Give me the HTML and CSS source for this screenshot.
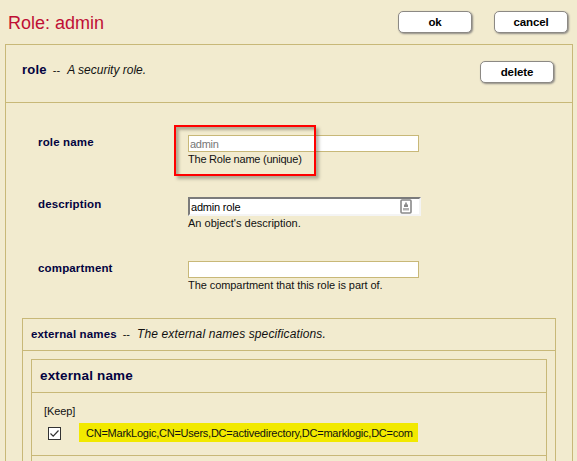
FILE: index.html
```html
<!DOCTYPE html>
<html lang="en">
<head>
<meta charset="utf-8">
<title>Role: admin</title>
<link rel="stylesheet" href="styles.css">
</head>
<body>
<header class="topbar">
  <h1 class="title">Role: admin</h1>
  <button class="btn">ok</button>
  <button class="btn">cancel</button>
</header>
<main class="panel">
  <div class="panel-head">
    <span class="name">role</span><span class="dash">--</span><em class="info role-info">A security role.</em>
    <button class="btn delete">delete</button>
  </div>
  <div class="fields">
    <div class="row">
      <label class="label">role name</label>
      <div class="control">
        <div class="input muted"><span class="v-admin">admin</span></div>
        <div class="help h-name">The Role name (unique)</div>
        <div class="callout"></div>
      </div>
    </div>
    <div class="row row-desc">
      <label class="label l-desc">description</label>
      <div class="control">
        <div class="input inset"><span class="v-desc">admin role</span>
          <svg class="autofill" width="12" height="15" viewBox="0 0 12 15"><rect x="1" y="1" width="10" height="13" rx="1" fill="#fff" stroke="#898989" stroke-width="1.6"/><path d="M5.200 3.500h1.600v2H8V8H4V5.500h1.200z" fill="#888"/><path d="M3 9h6v2.500H3z" fill="#b2b2b2"/></svg>
        </div>
        <div class="help">An object's description.</div>
      </div>
    </div>
    <div class="row row-comp">
      <label class="label">compartment</label>
      <div class="control">
        <div class="input"></div>
        <div class="help h-comp">The compartment that this role is part of.</div>
      </div>
    </div>
  </div>
  <section class="group">
    <div class="group-head"><span class="gname">external names</span><span class="dash gdash">--</span><em class="info ginfo">The external names specifications.</em></div>
    <div class="item">
      <h2 class="item-head"><span>external name</span></h2>
      <div class="item-body">
        <div class="keep">[Keep]</div>
        <div class="entry">
          <svg class="check" width="13" height="13" viewBox="0 0 13 13"><rect x=".5" y=".5" width="12" height="12" fill="#fff" stroke="#333"/><path d="M2.500 6.500l2.700 2.700L10.500 3.500" fill="none" stroke="#333" stroke-width="1.200"/></svg>
          <span class="mark">CN=MarkLogic,CN=Users,DC=activedirectory,DC=marklogic,DC=com</span>
        </div>
      </div>
    </div>
  </section>
</main>
</body>
</html>
```

FILE: styles.css
```css
* { box-sizing: border-box; }
html { height: 100%; overflow: hidden; }
body {
  margin: 0;
  height: 461px;
  overflow: hidden;
  display: flex;
  flex-direction: column;
  background: #f2ebcf;
  color: #111;
  font: 11px/13px "Liberation Sans", Arial, sans-serif;
}
.topbar { display: flex; flex: none; height: 44px; padding: 11px 9px 0 8px; gap: 22px; }
.title { flex: 1; margin: 2px 0 0; font-size: 18px; line-height: 21px; font-weight: 400; color: #bf0f35; }
.btn {
  width: 74px;
  height: 22px;
  padding: 1px 0 0;
  border: 1px solid #8c8984;
  border-radius: 5px;
  background: #fff;
  box-shadow: 1px 1px 2px #8c8984;
  color: #000;
  font: bold 11.5px/13px "Liberation Sans", Arial, sans-serif;
  letter-spacing: -.1px;
}
.panel { flex: none; width: 568px; height: 417px; margin-left: 5px; border: 1px solid #c8b878; border-bottom: 0; overflow: hidden; }
.panel-head { display: flex; height: 58px; padding: 16px 18px 0 16px; border-bottom: 1px solid #c8b878; white-space: pre; }
.name { margin-top: 1px; font-size: 13px; line-height: 15px; font-weight: 700; color: #03033f; letter-spacing: .25px; }
.dash { margin: 3px 7px 0 6px; }
.info { font-size: 12px; line-height: 15px; }
.role-info { margin-top: 2px; }
.delete { margin-left: auto; }
.fields { height: 215px; padding: 32px 0 0 32px; }
.row { display: flex; height: 62px; }
.row-desc { height: 64px; }
.label { width: 150px; padding-top: 1px; font-size: 11.5px; font-weight: 700; color: #03033f; letter-spacing: .16px; }
.l-desc { letter-spacing: .12px; }
.control { position: relative; }
.input { display: flex; width: 231px; height: 17px; padding: 2px 1px 0; border: 1px solid #c8b878; background: #fff; color: #000; }
.muted { color: #777; }
.v-admin { letter-spacing: -.3px; }
.v-desc { letter-spacing: -.2px; }
.inset { width: 233px; height: 19px; padding: 2px 7px 0 1px; border-width: 2px; border-style: solid; border-color: #7b7b7b #f4f4f4 #f4f4f4 #7b7b7b; justify-content: space-between; }
.autofill { margin-top: -2px; }
.help { margin-top: 1px; white-space: nowrap; }
.h-name { letter-spacing: -.23px; }
.h-comp { letter-spacing: -.07px; }
.callout { position: absolute; left: -14px; top: -10px; width: 142px; height: 51px; border: 2px solid #f00; box-shadow: 3px 3px 3px rgba(80, 75, 60, .4), inset 3px 3px 3px rgba(80, 75, 60, .4); }
.group { width: 534px; height: 143px; margin-left: 16px; border: 1px solid #c8b878; border-bottom: 0; overflow: hidden; }
.group-head { display: flex; height: 32px; padding: 8px 0 0 8px; border-bottom: 1px solid #c8b878; white-space: pre; }
.gname { margin-top: 1px; font-size: 11.5px; font-weight: 700; color: #03033f; letter-spacing: .14px; }
.gdash { margin-top: 1px; }
.ginfo { line-height: 14px; letter-spacing: .12px; }
.item { width: 516px; height: 102px; margin: 8px 0 0 8px; border: 1px solid #c8b878; border-bottom: 0; }
.item-head { height: 33px; margin: 0; padding: 8px; border-bottom: 1px solid #c8b878; font-size: 13.5px; line-height: 16px; color: #03033f; letter-spacing: .16px; }
.item-body { height: 63px; padding: 12px 0 0 12px; border-bottom: 1px solid #c8b878; }
.keep { height: 18px; letter-spacing: -.1px; }
.entry { display: flex; height: 19px; padding-left: 4px; }
.check { margin: 4px 18px 0 0; }
.mark { width: 339px; height: 19px; padding: 4px 0 0 7px; background: #f2e900; color: #111; letter-spacing: -.24px; white-space: nowrap; }
```
